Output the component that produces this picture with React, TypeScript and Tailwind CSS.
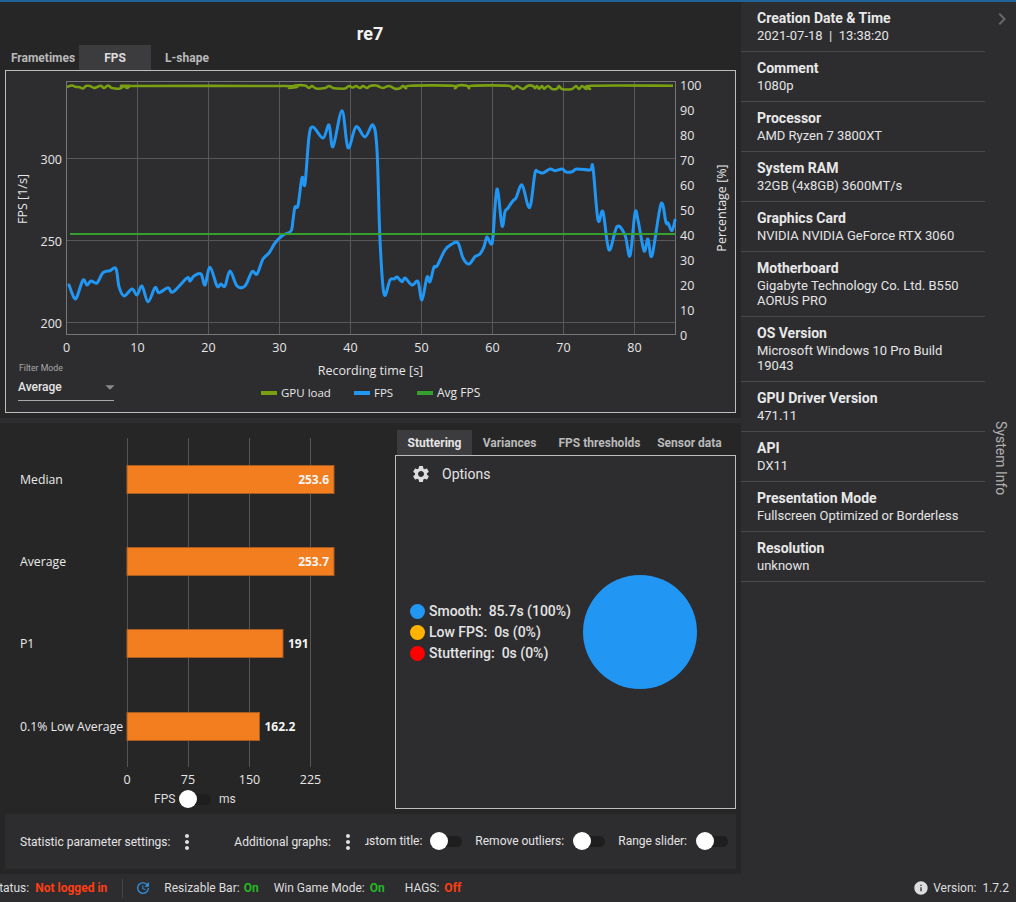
import React from "react";
import { MdSettings, MdMoreVert, MdUpdate, MdInfo, MdChevronRight, MdArrowDropDown } from "react-icons/md";

type Pt = [number, number];

const fpsLine: Pt[] = [
  [69, 285], [74, 297.7], [77, 296.7], [83, 280], [87, 285], [91, 281], [97, 283], [103, 272.7], [110, 270.7], [116, 268.7],
  [119, 286.7], [124, 296], [132, 289], [137, 295], [142, 286], [148, 301.7], [155, 287.7], [159, 292.7], [168, 287.7], [173, 292],
  [187, 278], [190, 281], [194, 276], [201, 274], [205, 285], [210, 267.3], [217, 286], [221, 284], [225, 286], [230, 271],
  [237, 286], [245, 286], [252, 271.7], [257, 274], [263, 259], [269, 253], [275, 243], [283, 235], [291, 231], [293, 220],
  [295, 207], [298, 205.6], [302, 177.7], [305, 184], [309, 136.7], [313, 127], [323, 138], [329, 125], [333, 146.7], [342, 110.7],
  [348, 147.7], [356, 126.7], [365, 137], [373, 125], [377, 150], [380, 240], [384, 294], [390, 280], [394, 279], [397, 277],
  [402, 281.7], [405, 278], [412, 285], [418, 281.7], [422, 300], [427, 277], [430, 281.7], [434, 267], [437, 266], [445, 250],
  [452, 244], [458, 243], [463, 258], [469, 264], [475, 256.7], [480, 254], [484, 246.7], [487, 237], [491, 244], [493, 236.7],
  [497, 189], [502, 225.7], [505, 211.7], [508, 208], [513, 200.7], [516, 198], [522, 185], [528, 205.7], [531, 203], [535, 173],
  [538, 171.7], [543, 173], [550, 169], [555, 170.7], [562, 169], [566, 172], [572, 171.7], [577, 169], [590, 170], [593, 167.7],
  [598, 220], [603, 211.7], [609, 250], [617, 226.7], [625, 235], [630, 255.7], [635, 213], [638, 220], [644, 250.7], [648, 239],
  [652, 255.7], [661, 204], [666, 222.7], [668, 223], [672, 230.7], [675, 220],
];

const gpuLine: Pt[] = [
  [67, 87], [72, 85.5], [76, 87], [79, 87], [83, 88.5], [86, 86], [90, 86], [94, 88], [97, 87], [101, 85.7], [104, 88], [108, 85.5],
  [112, 88], [120, 88.5], [124, 86], [127, 88], [130, 86], [133, 86], [285, 86], [289, 88], [292, 87], [295, 85.5], [305, 85.5],
  [309, 88], [312, 86], [316, 88.5], [325, 88], [329, 86], [333, 88], [337, 88.5], [345, 88.5], [349, 86], [353, 87.5], [356, 86],
  [360, 88], [363, 86], [367, 88], [370, 86], [376, 85.5], [380, 87], [383, 88], [389, 86], [395, 88.7], [400, 88.3], [403, 85.7],
  [406, 88.3], [410, 85.7], [453, 85.7], [455, 88.3], [457, 85.7], [467, 85.7], [469, 88.3], [472, 85.7], [508, 85.7], [513, 89],
  [517, 86], [523, 89], [528, 85.7], [533, 86], [535, 88.3], [537, 86], [539, 88.7], [542, 86], [544, 88.7], [548, 86], [552, 89],
  [557, 88.7], [559, 86], [562, 89], [572, 89], [576, 86], [579, 89], [582, 86], [586, 89], [587, 86], [590, 89], [592, 85.7], [673, 85.7],
];

// catmull-rom through the points, so the line stays rounded like the original chart
const smooth = (pts: Pt[]) => {
  let d = `M${pts[0][0]} ${pts[0][1]}`;
  for (let i = 0; i < pts.length - 1; i++) {
    const p0 = pts[Math.max(i - 1, 0)];
    const p1 = pts[i];
    const p2 = pts[i + 1];
    const p3 = pts[Math.min(i + 2, pts.length - 1)];
    const c1x = p1[0] + (p2[0] - p0[0]) / 6;
    const c1y = p1[1] + (p2[1] - p0[1]) / 6;
    const c2x = p2[0] - (p3[0] - p1[0]) / 6;
    const c2y = p2[1] - (p3[1] - p1[1]) / 6;
    d += ` C${c1x} ${c1y} ${c2x} ${c2y} ${p2[0]} ${p2[1]}`;
  }
  return d;
};

const chartFont = "font-['Open_Sans',sans-serif]";

const FpsChart: React.FC = () => {
  const xTicks = [0, 10, 20, 30, 40, 50, 60, 70, 80];
  const xPos = [66.5, 137.5, 208.5, 279.5, 350.5, 421.5, 492.5, 563.5, 634.5];
  const pct = [100, 90, 80, 70, 60, 50, 40, 30, 20, 10, 0];
  return (
    <svg viewBox="6 71 729 341" className={`w-[729px] h-[341px] block ${chartFont}`}>
      {xPos.slice(1).map((x) => (
        <line key={x} x1={x} x2={x} y1={81} y2={334} stroke="#58585a" />
      ))}
      {[158.5, 240.5, 322.5].map((y) => (
        <line key={y} x1={66} x2={675} y1={y} y2={y} stroke="#58585a" />
      ))}
      <rect x={66.5} y={81.5} width={609} height={253} fill="none" stroke="#77777a" />
      <path d={smooth(gpuLine)} fill="none" stroke="#7a9f10" strokeWidth={2.6} strokeLinejoin="round" />
      <path d={smooth(fpsLine)} fill="none" stroke="#2196f3" strokeWidth={3} strokeLinejoin="round" strokeLinecap="round" />
      <line x1={70} x2={675} y1={234} y2={234} stroke="#35a02c" strokeWidth={2.2} />
      {[[300, 164], [250, 246], [200, 328]].map(([v, y]) => (
        <text key={v} x={62} y={y} textAnchor="end" fontSize={12.5} fill="#e6e6e6">{v}</text>
      ))}
      {xTicks.map((v, i) => (
        <text key={v} x={xPos[i]} y={352} textAnchor="middle" fontSize={12.5} fill="#e6e6e6">{v}</text>
      ))}
      {pct.map((v, i) => (
        <text key={v} x={680} y={89.5 + i * 25} fontSize={12.5} fill="#e6e6e6">{v}</text>
      ))}
      <text transform="translate(27 199) rotate(-90)" textAnchor="middle" fontSize={12.5} fill="#e6e6e6">FPS [1/s]</text>
      <text transform="translate(726 208) rotate(-90)" textAnchor="middle" fontSize={12.5} fill="#e6e6e6">Percentage [%]</text>
      <text x={370.5} y={375} textAnchor="middle" fontSize={12.5} fill="#e6e6e6">Recording time [s]</text>
      <rect x={261} y={391} width={16} height={4} fill="#7a9f10" />
      <text x={281} y={397} fontSize={11.5} fill="#e6e6e6">GPU load</text>
      <rect x={354} y={391} width={16} height={4} fill="#2196f3" />
      <text x={374} y={397} fontSize={11.5} fill="#e6e6e6">FPS</text>
      <rect x={417} y={391} width={16} height={4} fill="#35a02c" />
      <text x={437} y={397} fontSize={12} fill="#e6e6e6">Avg FPS</text>
    </svg>
  );
};

const bars = [
  { label: "Median", value: "253.6", y: 465, end: 334, inside: true },
  { label: "Average", value: "253.7", y: 547, end: 334, inside: true },
  { label: "P1", value: "191", y: 629, end: 283, inside: false },
  { label: "0.1% Low Average", value: "162.2", y: 712, end: 259.5, inside: false },
];

const BarChart: React.FC = () => (
  <svg viewBox="0 423 395 365" className={`w-[395px] h-[365px] block ${chartFont}`}>
    {[127.5, 188.5, 249.5, 310.5].map((x) => (
      <line key={x} x1={x} x2={x} y1={438} y2={767} stroke="#555557" />
    ))}
    {bars.map((b) => (
      <g key={b.label}>
        <rect x={127} y={b.y + 0.5} width={b.end - 127} height={28} fill="#f37e20" stroke="#a85c20" />
        <text x={20} y={b.y + 19} fontSize={12.25} fill="#eaeaea">{b.label}</text>
        <text
          x={b.inside ? b.end - 5 : b.end + 5}
          y={b.y + 19}
          textAnchor={b.inside ? "end" : "start"}
          fontSize={12}
          fontWeight={700}
          fill="#f5f5f5"
        >
          {b.value}
        </text>
      </g>
    ))}
    {[[0, 127], [75, 188], [150, 249.5], [225, 310.5]].map(([v, x]) => (
      <text key={v} x={x} y={784} textAnchor="middle" fontSize={12.5} fill="#e6e6e6">{v}</text>
    ))}
  </svg>
);

const Switch: React.FC = () => (
  <div className="relative w-[32px] h-[18px] shrink-0 flex items-center">
    <div className="w-full h-[11px] rounded-full bg-[#1e1e1f]" />
    <div className="absolute left-0 top-0 w-[18px] h-[18px] rounded-full bg-white" />
  </div>
);

const info = [
  ["Creation Date & Time", "2021-07-18  |  13:38:20"],
  ["Comment", "1080p"],
  ["Processor", "AMD Ryzen 7 3800XT"],
  ["System RAM", "32GB (4x8GB) 3600MT/s"],
  ["Graphics Card", "NVIDIA NVIDIA GeForce RTX 3060"],
  ["Motherboard", "Gigabyte Technology Co. Ltd. B550 AORUS PRO"],
  ["OS Version", "Microsoft Windows 10 Pro Build 19043"],
  ["GPU Driver Version", "471.11"],
  ["API", "DX11"],
  ["Presentation Mode", "Fullscreen Optimized or Borderless"],
  ["Resolution", "unknown"],
];

const App: React.FC = () => {
  return (
    <div className="w-[1016px] h-[902px] overflow-hidden flex flex-col bg-[#2d2d30] text-[#e4e4e4] font-[Roboto,sans-serif]">
      <div className="h-[2px] shrink-0 bg-[#1f6399]" />
      <div className="flex flex-1 min-h-0">
        {/* Left column */}
        <div className="w-[741px] shrink-0 flex flex-col">
          <div className="h-[416px] bg-[#262627] px-[5px] flex flex-col">
            <div className="h-[43px] flex items-center justify-center pt-[19px] pr-[1px] text-[18px] font-bold text-[#f2f2f2]">re7</div>
            <div className="h-[25px] flex pl-[2px] text-[12px] font-bold text-[#b9b9b9]">
              <div className="w-[72px] flex items-center justify-center">Frametimes</div>
              <div className="w-[72px] flex items-center justify-center bg-[#3c3c3e] text-[#dcdcdc]">FPS</div>
              <div className="w-[72px] flex items-center justify-center">L-shape</div>
            </div>
            <div className="relative h-[343px] border border-[#bdbdbd] bg-[#2d2d30]">
              <FpsChart />
              {/* Filter mode select */}
              <div className="absolute left-[12px] top-[291px] w-[96px] h-[39px] border-b border-[#aaaaaa]">
                <div className="text-[8.75px] leading-[12px] pl-[1px] text-[#a8a8a8]">Filter Mode</div>
                <div className="flex items-center justify-between h-[22px] mt-[2px] text-[12px] font-medium">
                  Average
                  <MdArrowDropDown size={22} className="text-[#8c8c8c] -mr-[7px]" />
                </div>
              </div>
            </div>
          </div>
          <div className="h-[5px] bg-[#2d2d30]" />
          <div className="flex-1 bg-[#262627] flex flex-col">
            <div className="h-[391px] flex">
              <div className="w-[395px] shrink-0">
                <BarChart />
                <div className="flex items-center h-[18px] mt-[2px] pl-[154px] text-[12px] text-[#dddddd]">
                  <span className="w-[25px]">FPS</span>
                  <Switch />
                  <span className="ml-[8px]">ms</span>
                </div>
              </div>
              <div className="w-[341px] pt-[7px]">
                <div className="h-[25px] flex pl-[2px] text-[12px] font-bold text-[#b9b9b9]">
                  <div className="w-[75px] flex items-center justify-center bg-[#3c3c3e] text-[#e4e4e4]">Stuttering</div>
                  <div className="w-[75px] flex items-center justify-center">Variances</div>
                  <div className="w-[105px] flex items-center justify-center">FPS thresholds</div>
                  <div className="w-[75px] flex items-center justify-center">Sensor data</div>
                </div>
                <div className="h-[354px] border border-[#bdbdbd] bg-[#2d2d30] flex flex-col">
                  <div className="h-[36px] shrink-0 flex items-center pl-[15px] text-[14px] text-[#e4e4e4]">
                    <MdSettings size={20} className="text-[#dddddd]" />
                    <span className="ml-[11px]">Options</span>
                  </div>
                  <div className="flex-1 flex items-center pb-[37px] pl-[14px]">
                    <div className="flex flex-col gap-[6px] pt-[2px] text-[14px] font-medium leading-[15px] whitespace-pre">
                      <div className="flex items-center gap-[4px]"><span className="w-[15px] h-[15px] rounded-full bg-[#2196f3]" />Smooth:  85.7s (100%)</div>
                      <div className="flex items-center gap-[4px]"><span className="w-[15px] h-[15px] rounded-full bg-[#ffb300]" />Low FPS:  0s (0%)</div>
                      <div className="flex items-center gap-[4px]"><span className="w-[15px] h-[15px] rounded-full bg-[#ff0000]" />Stuttering:  0s (0%)</div>
                    </div>
                    <div className="w-[114px] h-[114px] rounded-full bg-[#2196f3] ml-auto mr-[38px]" />
                  </div>
                </div>
              </div>
            </div>
            <div className="h-[55px] mx-[5px] bg-[#2d2d30] flex items-center pl-[15px] text-[12px] text-[#e4e4e4]">
              <span className="whitespace-nowrap">Statistic parameter settings:</span>
              <MdMoreVert size={24} className="ml-[5px] text-[#e0e0e0] shrink-0" />
              <span className="ml-[35px] whitespace-nowrap">Additional graphs:</span>
              <MdMoreVert size={24} className="ml-[5px] text-[#e0e0e0] shrink-0" />
              <div className="flex-1 min-w-0 ml-[5px] overflow-hidden flex justify-end items-center gap-[13px] pr-[8px] -mt-[1px]">
                <div className="flex items-center gap-[8px] shrink-0 whitespace-nowrap">Custom title:<Switch /></div>
                <div className="flex items-center gap-[9px] shrink-0 whitespace-nowrap">Remove outliers:<Switch /></div>
                <div className="flex items-center gap-[9px] shrink-0 whitespace-nowrap">Range slider:<Switch /></div>
              </div>
            </div>
          </div>
        </div>

        {/* System info */}
        <div className="flex-1 flex min-w-0">
          <div className="w-[244px] shrink-0">
            {info.map(([title, value]) => (
              <div key={title} className="border-b border-[#4a4a4c] pl-[16px] pr-[10px] pt-[8px] pb-[8px]">
                <div className="text-[14px] leading-[17px] font-bold text-[#e8e8e8]">{title}</div>
                <div className="text-[13px] leading-[15px] mt-[1px] text-[#e4e4e4] whitespace-pre-wrap">{value}</div>
              </div>
            ))}
          </div>
          <div className="flex-1 flex flex-col items-center relative">
            <MdChevronRight size={24} className="text-[#68686a] mt-[5px] ml-[3px]" />
            <div className="absolute top-[419px] left-[5px] [writing-mode:vertical-rl] text-[14px] text-[#b0b0b0] whitespace-nowrap">System Info</div>
          </div>
        </div>
      </div>

      {/* Status bar */}
      <div className="h-[28px] shrink-0 flex items-center text-[12px] text-[#dddddd] overflow-hidden">
        <span className="-ml-[8px] whitespace-nowrap">Status:</span>
        <span className="ml-[6px] font-bold text-[#ff3d12]">Not logged in</span>
        <div className="w-px h-[19px] bg-[#46464a] ml-[15px]" />
        <MdUpdate size={16} className="ml-[12px] text-[#2f8fdc]" />
        <span className="ml-[13px]">Resizable Bar:</span>
        <span className="ml-[4px] font-bold text-[#25b825]">On</span>
        <span className="ml-[15px]">Win Game Mode:</span>
        <span className="ml-[5px] font-bold text-[#25b825]">On</span>
        <span className="ml-[20px]">HAGS:</span>
        <span className="ml-[5px] font-bold text-[#ff3d12]">Off</span>
        <div className="ml-auto mr-[7px] flex items-center">
          <MdInfo size={16} className="text-[#dddddd]" />
          <span className="ml-[4px] whitespace-pre">Version:  1.7.2</span>
        </div>
      </div>
    </div>
  );
};

export default App;
